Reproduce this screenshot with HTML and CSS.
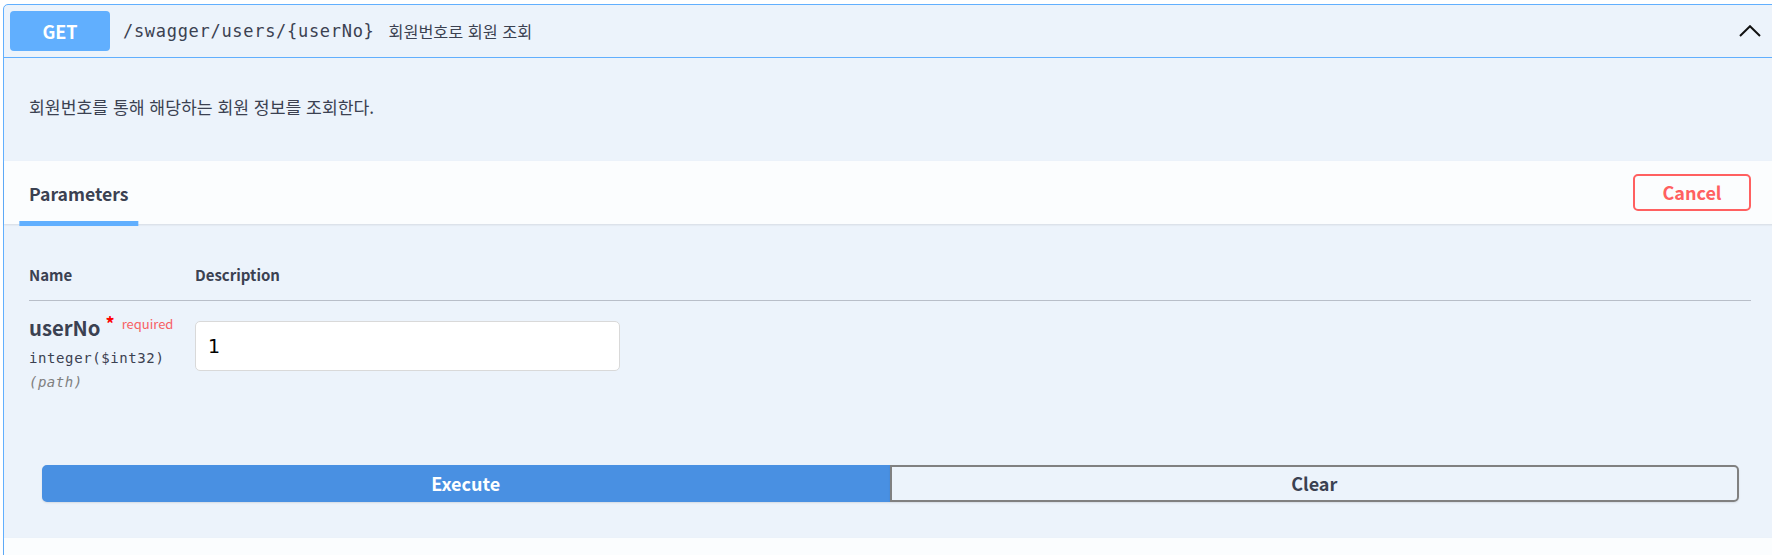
FILE: index.html
```html
<!DOCTYPE html>
<html lang="ko">
<head>
<meta charset="utf-8">
<title>GET /swagger/users/{userNo}</title>
<link rel="stylesheet" href="styles.css">
</head>
<body>
<div class="opblock">
  <div class="summary">
    <span class="method">GET</span>
    <span class="path">/swagger/users/{userNo}</span>
    <span class="summary-desc">회원번호로 회원 조회</span>
    <svg class="chevron" width="22" height="12" viewBox="0 0 22 12"><polyline points="1,11 11,1.2 21,11" fill="none" stroke="#111" stroke-width="2"/></svg>
  </div>
  <div class="desc-wrap">
    <p class="desc">회원번호를 통해 해당하는 회원 정보를 조회한다.</p>
  </div>
  <div class="section-header">
    <div class="tab"><h4 class="tab-title">Parameters</h4></div>
    <button class="btn-cancel">Cancel</button>
  </div>
  <div class="table-container">
    <div class="param-head">
      <div class="col-name">Name</div>
      <div class="col-desc">Description</div>
    </div>
    <div class="param-row">
      <div class="col-name">
        <div class="param-name">userNo<span class="star">*</span><span class="required">required</span></div>
        <div class="param-type">integer($int32)</div>
        <div class="param-in">(path)</div>
      </div>
      <div class="col-desc">
        <input class="param-input" type="text" value="1">
      </div>
    </div>
  </div>
  <div class="btn-group">
    <button class="btn btn-execute">Execute</button>
    <button class="btn btn-clear">Clear</button>
  </div>
  <div class="section-header responses"></div>
</div>
</body>
</html>
```
FILE: styles.css
```css
html, body {
  margin: 0;
  padding: 0;
  background: #ffffff;
  overflow: hidden;
  width: 1772px;
  height: 555px;
}
body {
  font-family: "Noto Sans CJK KR", "Noto Sans", sans-serif;
  color: #3b4151;
}
.opblock {
  box-sizing: border-box;
  margin: 4px 0 0 3px;
  width: 1774px;
  border: 1px solid #61affe;
  border-radius: 5px;
  background: #ecf3fb;
}
.summary {
  display: flex;
  align-items: center;
  padding: 6px 15px 6px 6px;
  border-bottom: 1px solid #61affe;
  height: 40px;
}
.method {
  width: 100px;
  height: 40px;
  border-radius: 4px;
  background: #61affe;
  color: #fff;
  font-weight: 700;
  font-size: 18px;
  line-height: 40px;
  text-align: center;
  flex: none;
}
.path {
  font-family: "DejaVu Sans Mono", monospace;
  font-size: 17px;
  letter-spacing: 0.7px;
  padding: 0 12px 0 13px;
  color: #3b4151;
}
.summary-desc {
  flex: 1;
  font-size: 16.25px;
  color: #3b4151;
  margin-left: 2px;
}
.chevron {
  flex: none;
}
.desc-wrap {
  padding: 35px 25px 40px;
}
.desc {
  margin: 0;
  font-size: 17.2px;
  line-height: 28px;
}
.section-header {
  box-sizing: border-box;
  height: 62.5px;
  display: flex;
  align-items: center;
  justify-content: space-between;
  padding: 0 25px;
  background: rgba(255, 255, 255, 0.8);
  box-shadow: 0 1px 2px rgba(0, 0, 0, 0.1);
}
.tab {
  align-self: stretch;
  display: flex;
  align-items: center;
}
.tab-title {
  position: relative;
  margin: 0;
  padding-top: 3px;
  font-size: 17.6px;
  font-weight: 700;
  color: #3b4151;
}
.tab-title::after {
  content: "";
  position: absolute;
  left: 50%;
  bottom: -19.5px;
  width: 120%;
  height: 4.5px;
  transform: translateX(-50%);
  background: #61affe;
}
.btn-cancel {
  box-sizing: border-box;
  width: 118px;
  height: 37px;
  border: 2px solid #ff6060;
  border-radius: 5px;
  background: transparent;
  color: #ff6060;
  font-family: inherit;
  font-size: 18px;
  font-weight: 700;
  padding: 0;
}
.table-container {
  padding: 25px 25px 25px;
}
.param-head {
  display: flex;
  border-bottom: 1px solid #b8bec8;
  height: 51px;
  align-items: center;
  font-size: 15px;
  font-weight: 700;
}
.col-name {
  width: 166px;
  flex: none;
}
.col-desc {
  flex: 1;
}
.param-head .col-name,
.param-head .col-desc {
  padding-top: 1px;
}
.param-row {
  display: flex;
  padding: 12px 0 11px;
}
.param-name {
  font-size: 20.3px;
  font-weight: 700;
  line-height: 28px;
  white-space: nowrap;
}
.star {
  color: #ff0000;
  font-size: 18px;
  position: relative;
  top: -5px;
  margin-left: 5px;
}
.required {
  color: #f76164;
  font-size: 13px;
  font-weight: 400;
  position: relative;
  top: -7px;
  margin-left: 7px;
}
.param-type {
  margin-top: 2px;
  font-family: "DejaVu Sans Mono", monospace;
  font-size: 14px;
  letter-spacing: 0.6px;
  line-height: 22px;
  color: #3b4151;
}
.param-in {
  margin-top: 2px;
  font-family: "DejaVu Sans Mono", monospace;
  font-style: italic;
  font-size: 14px;
  letter-spacing: 0.5px;
  line-height: 22px;
  color: #808080;
}
.param-input {
  box-sizing: border-box;
  display: block;
  margin: 8px 0 0;
  width: 425px;
  height: 50px;
  padding: 0 12px;
  border: 1px solid #d9d9d9;
  border-radius: 5px;
  background: #fff;
  font-family: "DejaVu Sans", sans-serif;
  font-size: 19px;
  color: #000;
  outline: none;
}
.btn-group {
  display: flex;
  padding: 36px 37.5px 36.5px;
}
.btn {
  box-sizing: border-box;
  flex: 1;
  height: 37px;
  font-family: inherit;
  font-size: 18px;
  font-weight: 700;
  padding: 0;
  box-shadow: 0 1px 2px rgba(0, 0, 0, 0.1);
}
.btn-execute {
  background: #4990e2;
  border: 2px solid #4990e2;
  color: #fff;
  border-radius: 5px 0 0 5px;
}
.btn-clear {
  background: transparent;
  border: 2px solid #808080;
  color: #3b4151;
  border-radius: 0 5px 5px 0;
}
.responses {
  height: 62px;
}
```
